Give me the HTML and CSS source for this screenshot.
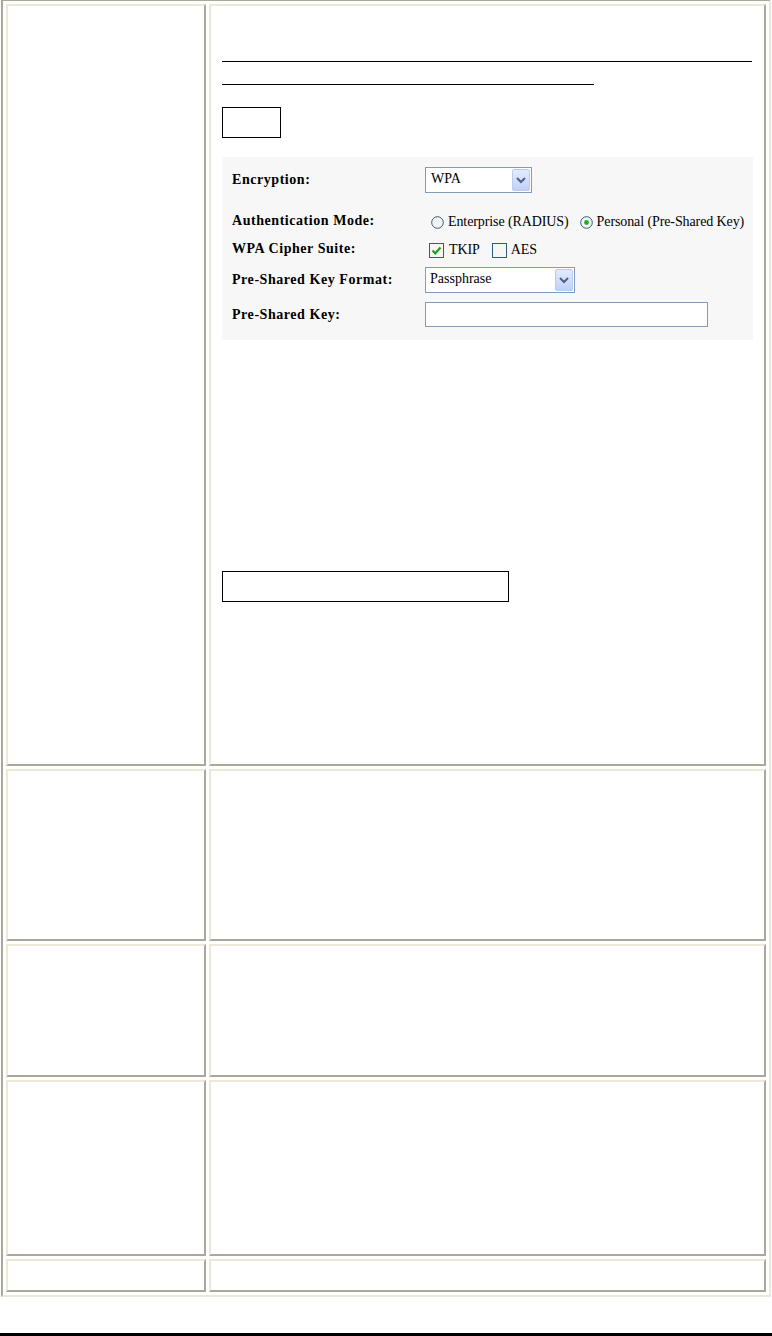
FILE: index.html
```html
<!DOCTYPE html>
<html>
<head>
<meta charset="utf-8">
<title>Wireless Security</title>
<link rel="stylesheet" href="styles.css">
</head>
<body>
<div class="page">
  <table class="doc">
    <tr class="h1">
      <td class="cell"></td>
      <td class="cell">
        <div class="body">
          <div class="rule rule-long"></div>
          <div class="rule rule-short"></div>
          <div class="textbox box-small"></div>
          <div class="panel">
            <div class="frow r1">
              <span class="flabel">Encryption:</span>
              <div class="select sel-enc">
                <span class="sel-text">WPA</span>
                <span class="sel-btn"><svg width="12" height="8" viewBox="0 0 12 8"><path d="M2 2 L6 6 L10 2" fill="none" stroke="#4d6185" stroke-width="2"/></svg></span>
              </div>
            </div>
            <div class="frow r2">
              <span class="flabel">Authentication Mode:</span>
              <div class="ctrls">
                <svg class="radio" width="13" height="13" viewBox="0 0 13 13"><circle cx="6.5" cy="6.5" r="5.8" fill="#f3f3ef" stroke="#2f5b84"/></svg>
                <span class="opt">Enterprise (RADIUS)</span>
                <svg class="radio radio-2" width="13" height="13" viewBox="0 0 13 13"><circle cx="6.5" cy="6.5" r="5.8" fill="#f3f3ef" stroke="#2f5b84"/><circle cx="6.5" cy="6.5" r="2.4" fill="#2aa72a"/></svg>
                <span class="opt">Personal (Pre-Shared Key)</span>
              </div>
            </div>
            <div class="frow r3">
              <span class="flabel">WPA Cipher Suite:</span>
              <div class="ctrls">
                <svg class="check" width="15" height="15" viewBox="0 0 15 15"><rect x="0.5" y="0.5" width="14" height="14" fill="#f6f6f2" stroke="#2f5b84"/><path d="M3.5 7.5 L6.3 10.3 L11.5 4.5" fill="none" stroke="#21a121" stroke-width="2.2"/></svg>
                <span class="opt">TKIP</span>
                <svg class="check check-2" width="15" height="15" viewBox="0 0 15 15"><rect x="0.5" y="0.5" width="14" height="14" fill="#f6f6f2" stroke="#2f5b84"/></svg>
                <span class="opt">AES</span>
              </div>
            </div>
            <div class="frow r4">
              <span class="flabel">Pre-Shared Key Format:</span>
              <div class="select sel-fmt">
                <span class="sel-text">Passphrase</span>
                <span class="sel-btn"><svg width="12" height="8" viewBox="0 0 12 8"><path d="M2 2 L6 6 L10 2" fill="none" stroke="#4d6185" stroke-width="2"/></svg></span>
              </div>
            </div>
            <div class="frow r5">
              <span class="flabel">Pre-Shared Key:</span>
              <div class="input"></div>
            </div>
          </div>
          <div class="textbox box-wide"></div>
        </div>
      </td>
    </tr>
    <tr class="h2"><td class="cell"></td><td class="cell"></td></tr>
    <tr class="h3"><td class="cell"></td><td class="cell"></td></tr>
    <tr class="h4"><td class="cell"></td><td class="cell"></td></tr>
    <tr class="h5"><td class="cell"></td><td class="cell"></td></tr>
  </table>
  <div class="footer-rule"></div>
</div>
</body>
</html>
```
FILE: styles.css
```css
html, body {
  margin: 0;
  padding: 0;
  background: #ffffff;
}

body {
  font-family: "Liberation Serif", "Times New Roman", serif;
  color: #000;
}

.page {
  width: 772px;
  height: 1336px;
  display: flex;
  flex-direction: column;
  overflow: hidden;
}

.doc {
  margin: -1px 0 0 1px;
  width: 770px;
  table-layout: fixed;
  border-collapse: separate;
  border-spacing: 3px;
  border-style: solid;
  border-width: 2px;
  border-color: #aca899 #ece9d8 #ece9d8 #aca899;
}

.doc td:first-child { width: 196px; }
.doc td:last-child { width: 553px; }

.cell {
  padding: 0;
  vertical-align: top;
  background: #fff;
  border-style: solid;
  border-width: 2px;
  border-color: #ece9d8 #aca899 #aca899 #ece9d8;
}

.h1 { height: 762px; }
.h2 { height: 172px; }
.h3 { height: 133px; }
.h4 { height: 176px; }
.h5 { height: 33px; }

.body {
  padding: 55px 11px 0 11px;
  display: flex;
  flex-direction: column;
  align-items: flex-start;
}

.rule {
  height: 1px;
  background: #000;
}
.rule-long { width: 530px; }
.rule-short { width: 372px; margin-top: 22px; }

.textbox {
  box-sizing: border-box;
  border: 1px solid #000;
  height: 31px;
}
.box-small { width: 59px; margin-top: 22px; }
.box-wide { width: 287px; margin-top: 231px; }

.panel {
  box-sizing: border-box;
  width: 531px;
  height: 183px;
  margin-top: 19px;
  padding: 10px 0 0 10px;
  background: #f7f7f7;
  display: flex;
  flex-direction: column;
}

.frow {
  display: flex;
  align-items: center;
}
.r1 { height: 26px; }
.r2 { height: 20px; margin-top: 19px; }
.r3 { height: 20px; margin-top: 8px; }
.r4 { height: 26px; margin-top: 7px; }
.r5 { height: 25px; margin-top: 9px; }

.flabel {
  width: 193px;
  flex: none;
  font-weight: bold;
  font-size: 14px;
  letter-spacing: 0.55px;
  white-space: nowrap;
}
.r2 .flabel { margin-top: -3px; }
.r3 .flabel { margin-top: -2px; }

.ctrls {
  display: flex;
  align-items: center;
  white-space: nowrap;
}

.opt {
  font-size: 14px;
  letter-spacing: -0.1px;
}

.radio { margin: 0 4px 0 6px; flex: none; }
.radio-2 { margin-left: 11px; }
.check { margin: 0 5px 0 4px; flex: none; }
.check-2 { margin-left: 12px; margin-right: 4px; }

.select {
  box-sizing: border-box;
  height: 26px;
  border: 1px solid #7f9db9;
  background: #fff;
  display: flex;
  align-items: center;
  justify-content: space-between;
  padding: 1px 1px 1px 5px;
}
.sel-enc { width: 107px; }
.sel-fmt { width: 150px; padding-left: 4px; }

.sel-text {
  font-size: 14px;
  margin-top: -2px;
}

.sel-btn {
  box-sizing: border-box;
  width: 18px;
  height: 22px;
  border: 1px solid #bccbf1;
  border-radius: 2px;
  background: linear-gradient(#e4ebfe, #c0d0fb);
  display: flex;
  align-items: center;
  justify-content: center;
}

.input {
  box-sizing: border-box;
  width: 283px;
  height: 25px;
  border: 1px solid #7f9db9;
  background: #fff;
}

.footer-rule {
  margin-top: auto;
  height: 3px;
  background: #000;
}
```
